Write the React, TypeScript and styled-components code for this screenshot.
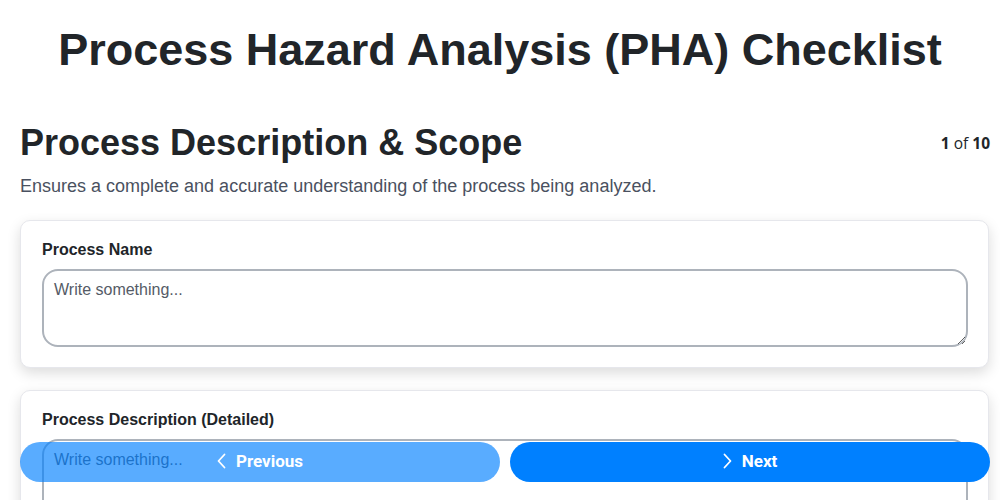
import React from "react";
import styled, { createGlobalStyle } from "styled-components";

const Global = createGlobalStyle`
  html, body { margin: 0; padding: 0; background: #ffffff; }
  body { font-family: "Liberation Sans", Arial, sans-serif; color: #212529; }
  * { box-sizing: border-box; }
`;

const Page = styled.div`
  width: 1000px;
  padding-bottom: 100px;
`;

const Title = styled.h1`
  margin: 0;
  padding: 24px 0 0;
  font-size: 45px;
  line-height: 52px;
  font-weight: 700;
  text-align: center;
  color: #212529;
`;

const Main = styled.main`
  padding: 0 10px 0 20px;
`;

const SectionHeader = styled.div`
  display: flex;
  justify-content: space-between;
  align-items: flex-start;
  margin-top: 45px;
`;

const SectionTitle = styled.h2`
  margin: 0;
  font-size: 36px;
  line-height: 44px;
  font-weight: 700;
  color: #212529;
`;

const Counter = styled.div`
  font-family: "Open Sans", "Noto Sans", sans-serif;
  font-size: 15.5px;
  line-height: 20px;
  padding-top: 12px;
  color: #212529;
  b { font-weight: 700; }
`;

const Description = styled.p`
  margin: 9px 0 22px;
  font-size: 18px;
  line-height: 24px;
  color: #4a5160;
`;

const Cards = styled.div`
  display: flex;
  flex-direction: column;
  gap: 22px;
  width: 969px;
`;

const Card = styled.div`
  background: #fff;
  border: 1px solid #e6e7ec;
  border-radius: 10px;
  box-shadow: 0 5px 14px rgba(0, 0, 0, 0.14);
  padding: 19px 20px 20px 21px;
`;

const Label = styled.label`
  display: block;
  font-weight: 700;
  font-size: 16px;
  line-height: 20px;
  margin-bottom: 9px;
  color: #212529;
`;

const TextArea = styled.textarea`
  display: block;
  width: 100%;
  height: 78px;
  border: 2px solid #adb3bb;
  border-radius: 16px;
  padding: 9px 10px;
  font-family: "Liberation Sans", Arial, sans-serif;
  font-size: 16px;
  line-height: 20px;
  color: #212529;
  resize: vertical;
  outline: none;
  &::placeholder { color: #555b66; }
`;

const Footer = styled.div`
  position: fixed;
  left: 20px;
  right: 10px;
  bottom: 18px;
  display: flex;
  gap: 10px;
`;

const NavButton = styled.button<{ $disabled?: boolean }>`
  flex: 1;
  height: 40px;
  border: none;
  border-radius: 20px;
  background: #0080ff;
  color: #fff;
  font-family: Roboto, "Liberation Sans", sans-serif;
  font-weight: 700;
  font-size: 17px;
  display: flex;
  align-items: center;
  justify-content: center;
  gap: 10px;
  padding: 0 0 2px;
  opacity: ${(p) => (p.$disabled ? 0.65 : 1)};
  cursor: pointer;
  svg { display: block; }
`;

const Chevron = ({ dir }: { dir: "left" | "right" }) => (
  <svg width="9" height="16" viewBox="0 0 9 16" fill="none" stroke="#fff" strokeWidth="1.8" strokeLinecap="round" strokeLinejoin="round">
    {dir === "left" ? <path d="M7.5 1.5L1.5 8l6 6.5" /> : <path d="M1.5 1.5L7.5 8l-6 6.5" />}
  </svg>
);

export default function App() {
  return (
    <>
      <Global />
      <Page>
        <Title>Process Hazard Analysis (PHA) Checklist</Title>
        <Main>
          <SectionHeader>
            <SectionTitle>Process Description &amp; Scope</SectionTitle>
            <Counter>
              <b>1</b> of <b>10</b>
            </Counter>
          </SectionHeader>
          <Description>Ensures a complete and accurate understanding of the process being analyzed.</Description>
          <Cards>
            <Card>
              <Label>Process Name</Label>
              <TextArea placeholder="Write something..." />
            </Card>
            <Card>
              <Label>Process Description (Detailed)</Label>
              <TextArea placeholder="Write something..." />
            </Card>
            <Card>
              <Label>Process Boundaries</Label>
              <TextArea placeholder="Write something..." />
            </Card>
          </Cards>
        </Main>
      </Page>
      <Footer>
        <NavButton $disabled>
          <Chevron dir="left" />
          Previous
        </NavButton>
        <NavButton>
          <Chevron dir="right" />
          Next
        </NavButton>
      </Footer>
    </>
  );
}
